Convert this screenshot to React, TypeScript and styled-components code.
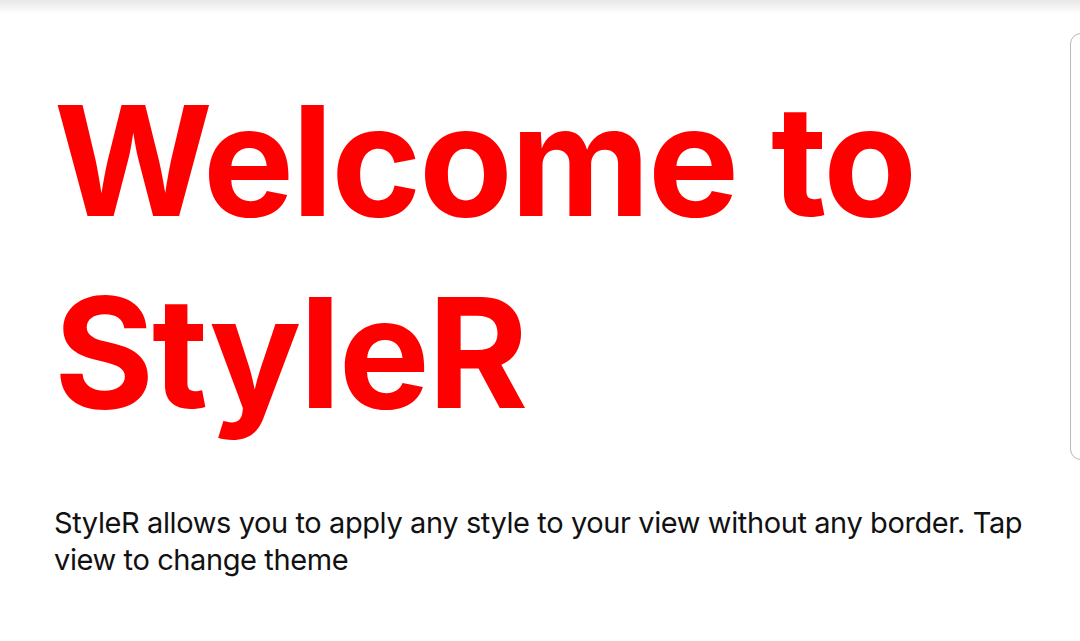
import React from 'react';
import styled, { createGlobalStyle } from 'styled-components';

const GlobalStyle = createGlobalStyle`
  html, body {
    margin: 0;
    padding: 0;
    background: #ffffff;
    font-family: Inter, "Noto Sans", sans-serif;
    overflow: hidden;
  }
`;

const Screen = styled.div`
  position: relative;
  width: 1080px;
  height: 641px;
  background: #ffffff;
  overflow: hidden;
`;

const TopShade = styled.div`
  position: absolute;
  top: 0;
  left: 0;
  right: 0;
  height: 14px;
  background: linear-gradient(to bottom, rgba(0, 0, 0, 0.09), rgba(0, 0, 0, 0));
`;

const Content = styled.main`
  display: flex;
  flex-direction: column;
  padding: 65px 40px 0 54px;
`;

const Title = styled.h1`
  margin: 0;
  font-family: Inter, sans-serif;
  font-weight: 700;
  font-size: 153px;
  line-height: 192px;
  letter-spacing: -2.2px;
  color: #ff0000;
`;

const Description = styled.p`
  margin: 55px 0 0;
  max-width: 990px;
  font-family: Inter, sans-serif;
  font-weight: 400;
  font-size: 29px;
  line-height: 37px;
  letter-spacing: -0.4px;
  color: #111111;
`;

const EdgeHandle = styled.div`
  position: absolute;
  top: 33px;
  right: -12px;
  width: 22px;
  height: 427px;
  border: 1.5px solid #b8b8b8;
  border-radius: 12px;
  box-sizing: border-box;
`;

export default function App() {
  return (
    <Screen>
      <GlobalStyle />
      <TopShade />
      <Content>
        <Title>
          Welcome to
          <br />
          StyleR
        </Title>
        <Description>
          StyleR allows you to apply any style to your view without any border. Tap view to change theme
        </Description>
      </Content>
      <EdgeHandle />
    </Screen>
  );
}
